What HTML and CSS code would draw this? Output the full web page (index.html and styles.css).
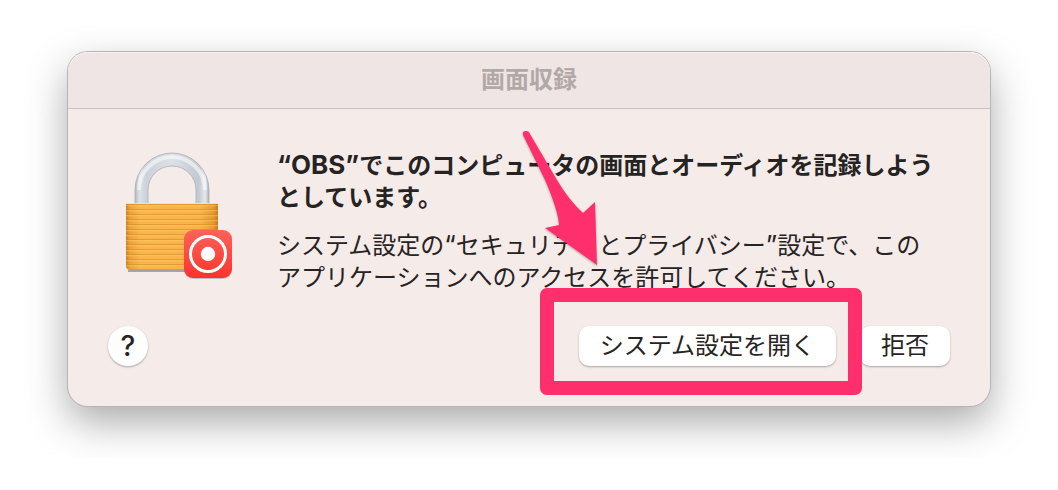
FILE: index.html
```html
<!DOCTYPE html>
<html lang="ja">
<head>
    <meta charset="UTF-8">
    <meta name="viewport" content="width=device-width, initial-scale=1.0">
    <title>画面収録</title>
    <link rel="stylesheet" href="styles.css">
</head>
<body>
    <div class="dialog" role="dialog" aria-labelledby="dialog-title">
        <header class="titlebar">
            <h1 id="dialog-title">画面収録</h1>
        </header>

        <main class="content">
            <svg class="lock-icon" viewBox="0 0 110 132" aria-hidden="true">
                <defs>
                    <linearGradient id="gold" x1="0" x2="1" y1="0" y2="0">
                        <stop offset="0" stop-color="#c98220"/>
                        <stop offset="0.04" stop-color="#eda036"/>
                        <stop offset="0.15" stop-color="#fbb54b"/>
                        <stop offset="0.8" stop-color="#fbb348"/>
                        <stop offset="0.95" stop-color="#e69a30"/>
                        <stop offset="1" stop-color="#c17a1c"/>
                    </linearGradient>
                    <linearGradient id="steel" x1="0" x2="1" y1="0" y2="0">
                        <stop offset="0" stop-color="#b4b9c0"/>
                        <stop offset="0.06" stop-color="#dde2e8"/>
                        <stop offset="0.15" stop-color="#ccd2d9"/>
                        <stop offset="0.5" stop-color="#dce1e7"/>
                        <stop offset="0.86" stop-color="#c3c9d1"/>
                        <stop offset="0.95" stop-color="#e6eaee"/>
                        <stop offset="1" stop-color="#a9aeb6"/>
                    </linearGradient>
                    <linearGradient id="red" x1="0" x2="0" y1="0" y2="1">
                        <stop offset="0" stop-color="#ff625a"/>
                        <stop offset="1" stop-color="#fa342c"/>
                    </linearGradient>
                    <pattern id="ridges" width="8" height="5" patternUnits="userSpaceOnUse">
                        <path d="M0 1.5H8" stroke="#cf8420" stroke-width="1" opacity="0.55"/>
                        <path d="M0 2.7H8" stroke="#ffd17c" stroke-width="1" opacity="0.5"/>
                    </pattern>
                </defs>
                <path d="M10 56V42a37 37 0 0 1 74 0V56H71V42a24 24 0 0 0-48 0V56Z" fill="url(#steel)" stroke="#a9aeb5" stroke-width="0.8"/>
                <path d="M14 42a33 33 0 0 1 66 0" fill="none" stroke="#fff" stroke-width="4" opacity="0.55"/>
                <path d="M3 123H90" stroke="#000" stroke-width="2" opacity="0.3"/>
                <path d="M1 55H93V118q0 4-5 4H6q-5 0-5-4Z" fill="url(#gold)"/>
                <path d="M1 55H93V118q0 4-5 4H6q-5 0-5-4Z" fill="url(#ridges)"/>
                <path d="M1 55.5H93" stroke="#ffe3a2"/>
                <rect x="59" y="83" width="48" height="48" rx="9" fill="#000" opacity="0.2"/>
                <rect x="59" y="82" width="48" height="48" rx="9" fill="url(#red)"/>
                <circle cx="83" cy="106" r="17.5" fill="none" stroke="#fff" stroke-width="3"/>
                <circle cx="83" cy="106" r="7.2" fill="#fff"/>
            </svg>

            <div class="message">
                <h2><span class="latin">“OBS”</span>でこのコンピュータの画面とオーディオを記録しよう<br>としています。</h2>
                <p>システム設定の<span class="latin">“</span>セキュリティとプライバシー<span class="latin">”</span>設定で、この<br>アプリケーションへのアクセスを許可してください。</p>
                <svg class="arrow" viewBox="0 0 80 140" aria-hidden="true">
                    <path d="M4 1Q0 1 1 5L23 50Q36 80 37 95L23 98L75 135L73 72L61 83Q46 69 35 50L8 4Q7 1 4 1Z"/>
                </svg>
            </div>
        </main>

        <footer class="actions">
            <button type="button" class="help" aria-label="ヘルプ">?</button>
            <div class="highlight">
                <button type="button" class="push">システム設定を開く</button>
            </div>
            <button type="button" class="push">拒否</button>
        </footer>
    </div>
</body>
</html>
```
FILE: styles.css
```css
* {
    box-sizing: border-box;
}

body {
    margin: 0;
    padding: 52px 68px;
    background-color: #fff;
    color: #262323;
    font-family: "Noto Sans CJK JP", sans-serif;
    font-size: 24px;
    line-height: 32px;
}

.dialog {
    background-color: #f5ebe9;
    border-radius: 20px;
    box-shadow: 0 0 0 1px #b9b3b3, 0 16px 40px rgba(0, 0, 0, 0.34);
}

.titlebar {
    height: 57px;
    padding-top: 10px;
    background-color: #eee5e4;
    border-bottom: 1px solid #c9c0c0;
    border-radius: 20px 20px 0 0;
    box-shadow: inset 0 1px 0 #f8f3f2;
    text-align: center;
}

h1 {
    margin: 0;
    color: #b2a8a8;
    font-size: 24px;
    font-weight: 700;
}

.content {
    display: flex;
    gap: 42px;
    padding: 39px 40px 0 57px;
}

.lock-icon {
    flex: none;
    width: 110px;
    height: 132px;
}

.message {
    position: relative;
    white-space: nowrap;
}

h2 {
    margin: 0 0 16px;
    font-size: 24px;
    font-weight: 700;
}

p {
    margin: 0;
}

.latin {
    font-family: Inter, sans-serif;
    font-size: 26px;
    line-height: 1;
}

.arrow {
    position: absolute;
    top: -18px;
    left: 245px;
    width: 80px;
    height: 140px;
    fill: #ff2e6d;
    filter: drop-shadow(0 1px 1px rgba(0, 0, 0, 0.3));
}

.actions {
    display: flex;
    align-items: center;
    gap: 24px;
    padding: 34px 40px 40px;
}

button {
    height: 40px;
    border: none;
    background-color: #fff;
    color: #262323;
    box-shadow: 0 1px 2px rgba(0, 0, 0, 0.3);
    font-family: inherit;
    font-size: 24px;
    line-height: 32px;
}

.push {
    display: block;
    padding: 0 21px 4px;
    border-radius: 10px;
}

.help {
    width: 40px;
    margin-right: auto;
    padding: 0;
    border-radius: 50%;
    font-family: Inter, sans-serif;
    font-size: 28px;
    font-weight: 500;
}

.highlight {
    position: relative;
    z-index: 1;
}

/* marker frame drawn around the button */
.highlight::after {
    content: "";
    position: absolute;
    inset: -38px -26px -29px -39px;
    border: 14px solid #ff2e6d;
    border-radius: 7px;
    pointer-events: none;
}
```
